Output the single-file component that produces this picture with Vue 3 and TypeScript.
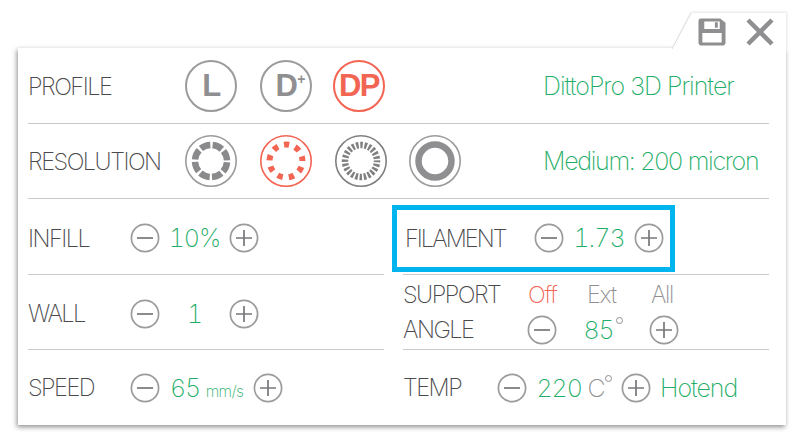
<script setup lang="ts">
interface Ring { r: number; w: number; dash?: string; offset?: number; color: string; stroke: string }
const circ = (r: number) => 2 * Math.PI * r
function segs(r: number, n: number, gap: number) {
  const c = circ(r)
  return `${c / n - gap} ${gap}`
}
const rings: Ring[] = [
  { r: 16, w: 6.5, dash: segs(16, 8, 2.4), offset: -1.2, color: '#8a8a8c', stroke: '#9b9b9d' },
  { r: 16.5, w: 6, dash: segs(16.5, 9, 6.2), offset: 2.6 + circ(16.5) / 4, color: '#f26552', stroke: '#f26552' },
  { r: 16, w: 6.5, dash: segs(16, 24, 1.7), offset: 1.2, color: '#808082', stroke: '#808082' },
  { r: 16.5, w: 6.5, color: '#8f8f91', stroke: '#9b9b9d' }
]
</script>

<template>
  <div class="page">
    <div class="panel">
      <div class="tab">
        <svg class="tab-shape" width="116" height="38" viewBox="0 0 116 38">
          <path d="M2 37 L21 1 L116 1 L116 37" fill="#fff" />
          <path d="M2 37 L21 1" fill="none" stroke="#dcdcdc" stroke-width="1" />
        </svg>
        <svg class="save" width="28" height="28" viewBox="0 0 29 29">
          <path fill="#8f8f91" fill-rule="evenodd" d="M3 .5H23L28.500 5V26a2.500 2.500 0 0 1-2.500 2.500H3A2.500 2.500 0 0 1 .5 26V3A2.500 2.500 0 0 1 3 .5ZM6.500 3.500V11.500H22.500V3.500ZM17.500 4.500H20.500V10H17.500ZM4.500 15.500V25.500H24.500V15.500Z" />
        </svg>
        <svg class="close" width="28" height="28" viewBox="0 0 28 28">
          <path d="M2 2 26 26M26 2 2 26" stroke="#8f8f91" stroke-width="4.500" fill="none" />
        </svg>
      </div>

      <div class="row top">
        <span class="label">PROFILE</span>
        <div class="badges">
          <span class="badge">L</span>
          <span class="badge dplus">D<sup>+</sup></span>
          <span class="badge active">DP</span>
        </div>
        <span class="info">DittoPro 3D Printer</span>
      </div>

      <div class="row top second">
        <span class="label">RESOLUTION</span>
        <div class="badges">
          <svg v-for="(ring, i) in rings" :key="i" class="res-icon" width="52" height="52" viewBox="0 0 52 52">
            <circle cx="26" cy="26" r="25.200" fill="none" :stroke="ring.stroke" stroke-width="1.600" />
            <circle cx="26" cy="26" :r="ring.r" fill="none" :stroke="ring.color" :stroke-width="ring.w" :stroke-dasharray="ring.dash" :stroke-dashoffset="ring.offset" />
          </svg>
        </div>
        <span class="info tight">Medium: 200 micron</span>
      </div>

      <div class="columns">
        <div class="col left">
          <div class="line a">
            <span class="label w102">INFILL</span>
            <span class="step"><svg width="30" height="30" viewBox="0 0 30 30"><circle cx="15" cy="15" r="13.600" fill="none" stroke="#9b9b9d" stroke-width="1.700"/><path d="M7 15H23" stroke="#77777a" stroke-width="1.700"/></svg></span>
            <span class="value v69">10%</span>
            <span class="step"><svg width="30" height="30" viewBox="0 0 30 30"><circle cx="15" cy="15" r="13.600" fill="none" stroke="#9b9b9d" stroke-width="1.700"/><path d="M7 15H23M15 7V23" stroke="#77777a" stroke-width="1.700"/></svg></span>
          </div>
          <div class="line b">
            <span class="label w102">WALL</span>
            <span class="step"><svg width="30" height="30" viewBox="0 0 30 30"><circle cx="15" cy="15" r="13.600" fill="none" stroke="#9b9b9d" stroke-width="1.700"/><path d="M7 15H23" stroke="#77777a" stroke-width="1.700"/></svg></span>
            <span class="value v69">1</span>
            <span class="step"><svg width="30" height="30" viewBox="0 0 30 30"><circle cx="15" cy="15" r="13.600" fill="none" stroke="#9b9b9d" stroke-width="1.700"/><path d="M7 15H23M15 7V23" stroke="#77777a" stroke-width="1.700"/></svg></span>
          </div>
          <div class="line last">
            <span class="label w102">SPEED</span>
            <span class="step"><svg width="30" height="30" viewBox="0 0 30 30"><circle cx="15" cy="15" r="13.600" fill="none" stroke="#9b9b9d" stroke-width="1.700"/><path d="M7 15H23" stroke="#77777a" stroke-width="1.700"/></svg></span>
            <span class="value v93">65 <small>mm/s</small></span>
            <span class="step"><svg width="30" height="30" viewBox="0 0 30 30"><circle cx="15" cy="15" r="13.600" fill="none" stroke="#9b9b9d" stroke-width="1.700"/><path d="M7 15H23M15 7V23" stroke="#77777a" stroke-width="1.700"/></svg></span>
          </div>
        </div>

        <div class="col right">
          <div class="line a filament-line">
            <div class="highlight">
              <span class="label w129 filament">FILAMENT</span>
              <span class="step"><svg width="30" height="30" viewBox="0 0 30 30"><circle cx="15" cy="15" r="13.600" fill="none" stroke="#9b9b9d" stroke-width="1.700"/><path d="M7 15H23" stroke="#77777a" stroke-width="1.700"/></svg></span>
              <span class="value v70">1.73</span>
              <span class="step"><svg width="30" height="30" viewBox="0 0 30 30"><circle cx="15" cy="15" r="13.600" fill="none" stroke="#9b9b9d" stroke-width="1.700"/><path d="M7 15H23M15 7V23" stroke="#77777a" stroke-width="1.700"/></svg></span>
            </div>
          </div>
          <div class="line double">
            <div class="sub">
              <span class="label w125">SUPPORT</span>
              <span class="opt off">Off</span>
              <span class="opt ext">Ext</span>
              <span class="opt">All</span>
            </div>
            <div class="sub">
              <span class="label w124">ANGLE</span>
              <span class="step"><svg width="30" height="30" viewBox="0 0 30 30"><circle cx="15" cy="15" r="13.600" fill="none" stroke="#9b9b9d" stroke-width="1.700"/><path d="M7 15H23" stroke="#77777a" stroke-width="1.700"/></svg></span>
              <span class="value v92">85<i class="deg"></i></span>
              <span class="step"><svg width="30" height="30" viewBox="0 0 30 30"><circle cx="15" cy="15" r="13.600" fill="none" stroke="#9b9b9d" stroke-width="1.700"/><path d="M7 15H23M15 7V23" stroke="#77777a" stroke-width="1.700"/></svg></span>
            </div>
          </div>
          <div class="line last">
            <span class="label w94">TEMP</span>
            <span class="step"><svg width="30" height="30" viewBox="0 0 30 30"><circle cx="15" cy="15" r="13.600" fill="none" stroke="#9b9b9d" stroke-width="1.700"/><path d="M7 15H23" stroke="#77777a" stroke-width="1.700"/></svg></span>
            <span class="value v94">220 <span class="unit">C<i class="deg small"></i></span></span>
            <span class="step"><svg width="30" height="30" viewBox="0 0 30 30"><circle cx="15" cy="15" r="13.600" fill="none" stroke="#9b9b9d" stroke-width="1.700"/><path d="M7 15H23M15 7V23" stroke="#77777a" stroke-width="1.700"/></svg></span>
            <span class="hot">Hotend</span>
          </div>
        </div>
      </div>
    </div>
  </div>
</template>

<style>
html, body { background: #fff; }
</style>

<style scoped>
.page { width: 800px; height: 446px; box-sizing: border-box; padding: 48px 14px 21px 18px; overflow: hidden; }
.panel {
  position: relative; width: 768px; height: 377px; box-sizing: border-box;
  padding: 0 17px 0 10px; background: #fff;
  box-shadow: -1px 2px 5px rgba(0,0,0,.45);
  font-family: Inter, "Liberation Sans", sans-serif; font-weight: 200;
}
.tab { position: absolute; right: 0; top: -36px; width: 116px; height: 38px; }
.tab-shape { position: absolute; left: 0; top: 0; filter: drop-shadow(1px -1px 1px rgba(0,0,0,.1)); }
.save { position: absolute; left: 28px; top: 6px; }
.close { position: absolute; left: 76px; top: 6px; }
.row.top { display: flex; align-items: center; height: 76px; box-sizing: border-box; border-bottom: 1px solid #c9c9c9; padding-top: 1px; }
.row.second { height: 75px; padding-top: 0; }
.label { color: #4a4a4c; font-size: 23.500px; letter-spacing: -1.500px; white-space: nowrap; flex: none; }
.label.filament { letter-spacing: -1.950px; }
.row.top > .label { width: 157px; }
.badges { display: flex; gap: 23px; width: 358px; flex: none; }
.res-icon:last-child { margin-left: -1px; }
.badge { width: 52px; height: 52px; box-sizing: border-box; border: 2px solid #9b9b9d; border-radius: 50%; display: flex; align-items: center; justify-content: center; color: #8f8f91; font: 700 31px/1 "Liberation Sans", sans-serif; letter-spacing: -1.500px; padding-bottom: 1px; }
.badge.dplus { padding-left: 9px; }
.badge sup { font-size: 14px; line-height: 14px; letter-spacing: 0; align-self: flex-start; margin-top: 10px; margin-left: 1px; }
.badge.active { border-color: #f26552; color: #f26552; margin-left: -2px; }
.res-icon { flex: none; }
.info { color: #1fae68; font-size: 25px; white-space: nowrap; letter-spacing: -1px; }
.info.tight { letter-spacing: -1.300px; }
.columns { display: flex; gap: 19px; }
.col { display: flex; flex-direction: column; }
.left { width: 356px; }
.right { width: 366px; }
.line { display: flex; align-items: center; box-sizing: border-box; border-bottom: 1px solid #c9c9c9; }
.line.a { height: 76px; padding-top: 3px; }
.line.b { height: 75px; padding-top: 3px; }
.line.last { border-bottom: none; height: 75px; }
.step { width: 30px; height: 30px; flex: none; display: block; }
.step svg { display: block; }
.value { color: #1fae68; font-size: 25px; text-align: center; white-space: nowrap; flex: none; letter-spacing: -1.050px; font-variant-numeric: tabular-nums; }
.value small { font-size: 15.500px; letter-spacing: -.7px; }
.w102 { width: 102px; }
.w129 { width: 129px; }
.w125 { width: 125px; }
.w124 { width: 124px; }
.w94 { width: 94px; }
.v69 { width: 69px; }
.v70 { width: 70px; }
.v93 { width: 93px; }
.v94 { width: 94px; }
.v92 { width: 92px; }
.filament-line { padding-top: 0; }
.highlight { display: flex; align-items: center; box-sizing: border-box; margin: 0 0 0 -11px; width: 283px; height: 67px; padding-left: 8px; border: 5px solid #00b4f0; }
.double { height: 75px; flex-direction: column; align-items: stretch; justify-content: center; gap: 1px; }
.sub { display: flex; align-items: center; height: 34px; }
.opt { color: #8f8f91; font-size: 23.500px; letter-spacing: -1.300px; width: 59px; flex: none; }
.opt.ext { width: 64px; }
.opt.off { color: #f26552; }
.deg { display: inline-block; width: 7px; height: 7px; box-sizing: border-box; border: 1.500px solid #8f8f91; border-radius: 50%; vertical-align: 15px; margin-left: 2px; }
.deg.small { margin-left: 0; }
.unit { color: #8f8f91; }
.hot { color: #1fae68; font-size: 25px; margin-left: 9px; letter-spacing: -1.050px; }
</style>
